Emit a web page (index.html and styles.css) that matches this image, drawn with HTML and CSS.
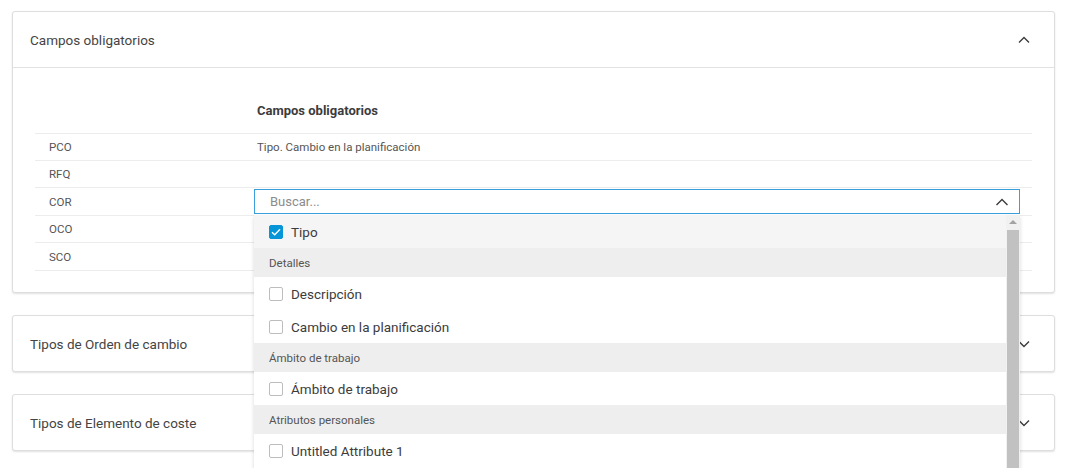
FILE: index.html
```html
<!DOCTYPE html>
<html lang="es">
  <head>
    <meta charset="utf-8" />
    <title>Campos obligatorios</title>
    <link rel="stylesheet" href="styles.css">
  </head>
  <body>
    <div class="main">
      <div class="card">
        <div class="card-header">
          <span class="card-title">Campos obligatorios</span>
          <svg class="chevron" width="12" height="8" viewBox="0 0 12 8"><path d="M1 6.5 6 1.5 11 6.5" /></svg>
        </div>
        <div class="card-body">
          <table class="fields-table">
            <tr class="head-row">
              <td></td>
              <td>Campos obligatorios</td>
            </tr>
            <tr>
              <td>PCO</td>
              <td>Tipo. Cambio en la planificación</td>
            </tr>
            <tr>
              <td>RFQ</td>
              <td></td>
            </tr>
            <tr class="tall-row">
              <td>COR</td>
              <td class="select-cell">
                <div class="select-wrap">
                  <div class="search-input">
                    <span class="placeholder">Buscar...</span>
                    <svg class="input-chevron" width="14" height="8" viewBox="0 0 14 8"><path d="M1.5 7 7 1.5 12.5 7" /></svg>
                  </div>
                  <div class="dropdown">
                    <div class="options">
                      <div class="option selected">
                        <span class="checkbox checked">
                          <svg width="10" height="8" viewBox="0 0 10 8"><path d="M1 4.2 3.7 6.8 9 1.2" /></svg>
                        </span>
                        Tipo
                      </div>
                      <div class="group">Detalles</div>
                      <div class="option"><span class="checkbox"></span>Descripción</div>
                      <div class="option"><span class="checkbox"></span>Cambio en la planificación</div>
                      <div class="group">Ámbito de trabajo</div>
                      <div class="option"><span class="checkbox"></span>Ámbito de trabajo</div>
                      <div class="group">Atributos personales</div>
                      <div class="option"><span class="checkbox"></span>Untitled Attribute 1</div>
                    </div>
                    <div class="scrollbar">
                      <div class="scroll-arrow"></div>
                      <div class="scroll-thumb"></div>
                    </div>
                  </div>
                </div>
              </td>
            </tr>
            <tr>
              <td>OCO</td>
              <td></td>
            </tr>
            <tr class="tall-row">
              <td>SCO</td>
              <td></td>
            </tr>
          </table>
        </div>
      </div>

      <div class="card">
        <div class="card-header closed">
          <span class="card-title">Tipos de Orden de cambio</span>
          <svg class="chevron" width="12" height="8" viewBox="0 0 12 8"><path d="M1 1.5 6 6.5 11 1.5" /></svg>
        </div>
      </div>

      <div class="card">
        <div class="card-header closed">
          <span class="card-title">Tipos de Elemento de coste</span>
          <svg class="chevron" width="12" height="8" viewBox="0 0 12 8"><path d="M1 1.5 6 6.5 11 1.5" /></svg>
        </div>
      </div>
    </div>
  </body>
</html>
```

FILE: styles.css
```css
body {
  margin: 0;
  height: 100vh;
  background-color: white;
  font-family: Roboto, "Liberation Sans", sans-serif;
  color: #3c3c3c;
  overflow: hidden;
}
.main {
  padding: 11px 12px 0 12px;
  display: flex;
  flex-direction: column;
  gap: 22px;
}
.card {
  border: 1px solid #dedede;
  border-radius: 3px;
  box-shadow: 0 1px 2px rgba(0, 0, 0, 0.12);
  background: white;
}
.card-header {
  height: 55px;
  padding: 0 24px 0 17px;
  display: flex;
  align-items: center;
  justify-content: space-between;
  border-bottom: 1px solid #e2e2e2;
}
.card-header.closed {
  border-bottom: none;
}
.card-title {
  font-size: 13.5px;
  color: #444;
}
.chevron path,
.input-chevron path {
  fill: none;
  stroke: #3c3c3c;
  stroke-width: 1.4;
}
.card-body {
  padding: 20px 22px 21px 22px;
}
.fields-table {
  width: 100%;
  border-collapse: collapse;
  font-size: 11.5px;
  color: #555;
}
.fields-table td {
  height: 26px;
  padding: 0 14px;
  border-bottom: 1px solid #ececec;
  text-align: left;
  vertical-align: middle;
}
.fields-table .tall-row td {
  height: 27px;
}
.fields-table td:first-child {
  width: 180px;
}
.head-row td {
  height: 45px;
  font-size: 13px;
  font-weight: bold;
  color: #3c3c3c;
}
.fields-table td.select-cell {
  padding: 0 12px 0 11px;
}
.select-wrap {
  position: relative;
}
.search-input {
  height: 23px;
  border: 1px solid #3aa0dd;
  display: flex;
  align-items: center;
  justify-content: space-between;
  padding: 0 10px 0 15px;
  background: white;
}
.placeholder {
  color: #8c8c8c;
  font-size: 13px;
}
.dropdown {
  position: absolute;
  top: 26px;
  left: 0;
  right: 0;
  height: 254px;
  display: flex;
  background: white;
  box-shadow: 0 2px 4px rgba(0, 0, 0, 0.15);
  z-index: 2;
}
.options {
  flex: 1;
}
.option {
  height: 33px;
  display: flex;
  align-items: center;
  gap: 8px;
  padding-left: 15px;
  font-size: 13.5px;
  color: #3c3c3c;
}
.option.selected {
  background: #f5f5f5;
}
.group {
  height: 29px;
  display: flex;
  align-items: center;
  padding-left: 15px;
  background: #eeeeee;
  font-size: 11.5px;
  color: #555;
}
.checkbox {
  width: 12px;
  height: 12px;
  border: 1px solid #bdbdbd;
  border-radius: 2px;
  background: white;
  display: flex;
  align-items: center;
  justify-content: center;
}
.checkbox.checked {
  background: #0696d7;
  border-color: #0696d7;
}
.checkbox svg path {
  fill: none;
  stroke: white;
  stroke-width: 1.4;
}
.scrollbar {
  width: 14px;
  background: #f1f1f1;
  display: flex;
  flex-direction: column;
  align-items: center;
}
.scroll-arrow {
  margin-top: 5px;
  width: 0;
  height: 0;
  border-left: 4px solid transparent;
  border-right: 4px solid transparent;
  border-bottom: 4px solid #a3a3a3;
}
.scroll-thumb {
  margin-top: 6px;
  width: 12px;
  flex: 1;
  background: #c1c1c1;
}
```
